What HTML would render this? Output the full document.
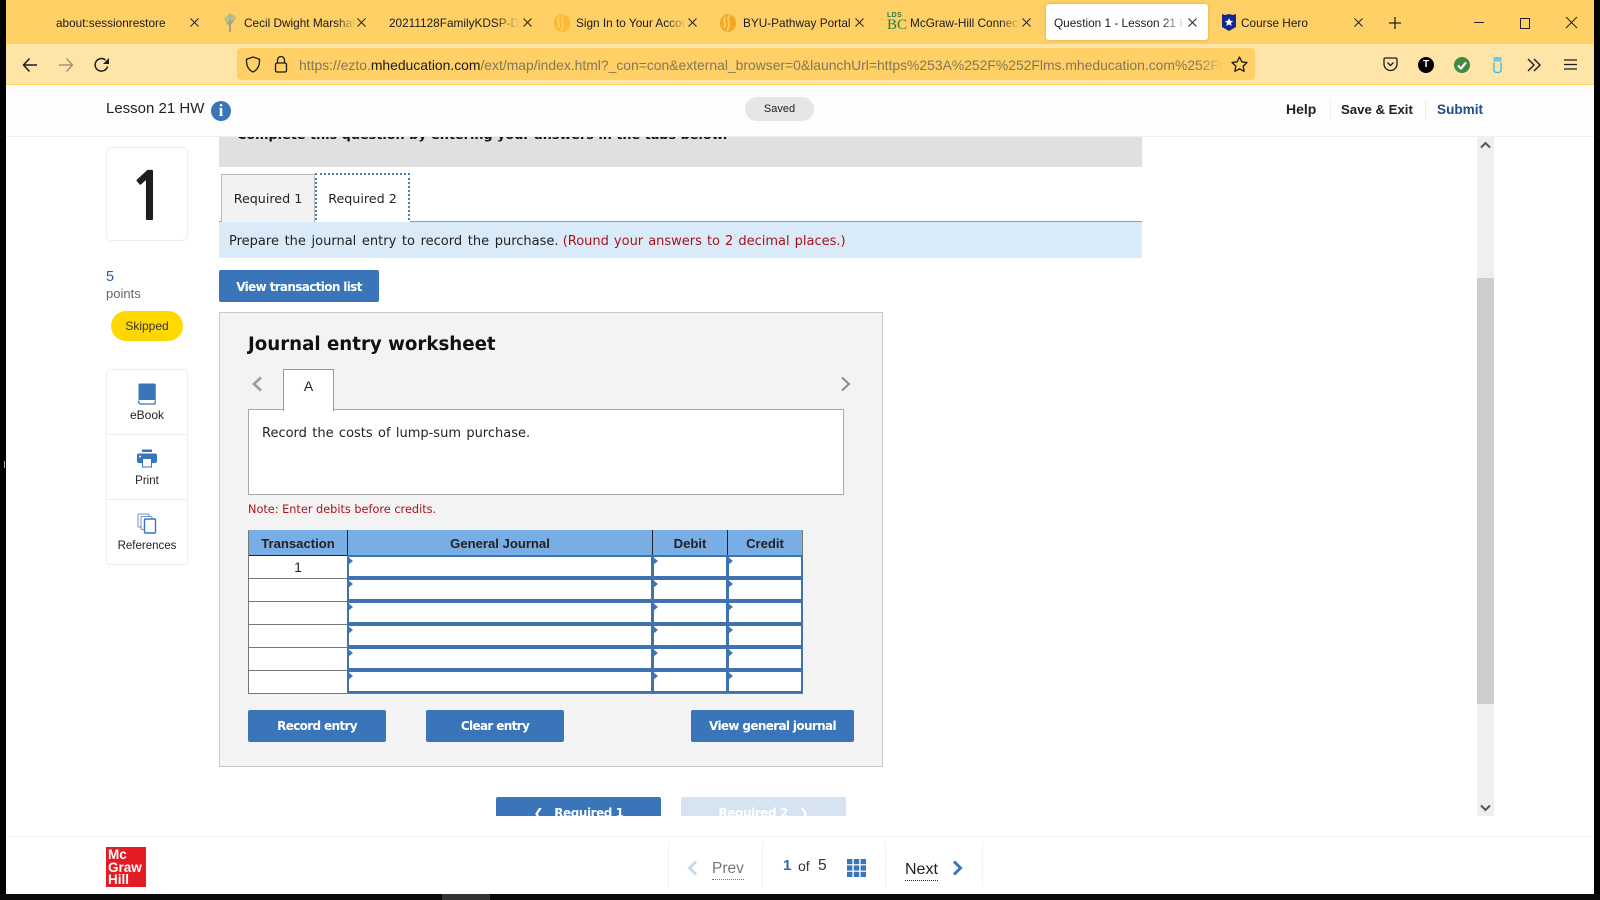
<!DOCTYPE html>
<html><head><meta charset="utf-8"><title>Question 1 - Lesson 21 HW</title>
<style>
html,body{margin:0;padding:0;background:#fff;}
body{position:relative;width:1600px;height:900px;overflow:hidden;font-family:"Liberation Sans",sans-serif;}
.a{position:absolute;}
.t{position:absolute;white-space:nowrap;}
.tab{font-size:11.8px;line-height:16px;top:15px;color:#1c1b22;overflow:hidden;-webkit-mask-image:linear-gradient(90deg,#000 82%,transparent 100%);mask-image:linear-gradient(90deg,#000 82%,transparent 100%);}
.x{position:absolute;top:17px;width:11px;height:11px;}
.v{font-family:"DejaVu Sans",sans-serif;}
.btn{position:absolute;background:#3b75b9;color:#fff;font-family:"DejaVu Sans",sans-serif;font-size:12px;font-weight:bold;text-align:center;border-radius:2px;letter-spacing:-.65px;}
.th{position:absolute;top:530px;height:25px;line-height:27px;background:#78ade5;text-align:center;font-size:13.1px;font-weight:bold;color:#222;border-right:1px solid #222;box-sizing:border-box;}
.cell{position:absolute;background:#fff;border:2px solid #3f72ae;box-sizing:border-box;height:23px;}
.cell:before{content:"";position:absolute;left:-1px;top:0;border-left:5px solid #3b75b9;border-top:4px solid transparent;border-bottom:4px solid transparent;}
.tc{position:absolute;left:249px;width:98px;height:22px;background:#fff;border-bottom:1px solid #777;text-align:center;font-size:14px;line-height:22px;color:#222;}
.sl{position:absolute;width:1px;background:#f1f1f1;top:842px;height:45px;}
</style></head><body>

<!-- browser chrome -->
<div class="a" style="left:0;top:0;width:1600px;height:44px;background:#ffd066;"></div>
<div class="a" style="left:0;top:44px;width:1600px;height:40px;background:#ffe4a8;"></div>
<div class="a" style="left:0;top:84px;width:1600px;height:1px;background:#ffd066;"></div>

<div class="t tab" style="left:56px;width:125px;-webkit-mask-image:none;mask-image:none;">about:sessionrestore</div>
<svg class="a" style="left:222px;top:13px" width="17" height="20" viewBox="0 0 17 20"><circle cx="5" cy="6" r="3" fill="#b5c77d"/><circle cx="11" cy="5" r="3" fill="#c4b98a"/><circle cx="8" cy="3" r="2.5" fill="#a9c27a"/><path d="M8 6v13M5 9l3 3M11 8l-3 3" stroke="#a8a08c" stroke-width="2" fill="none"/></svg>
<div class="t tab" style="left:244px;width:112px;">Cecil Dwight Marshall</div>
<div class="t tab" style="left:389px;width:130px;">20211128FamilyKDSP-D1.pdf</div>
<svg class="a" style="left:553px;top:13px" width="18" height="20" viewBox="0 0 18 20"><ellipse cx="9" cy="10" rx="8" ry="9" fill="#fdb92f"/><path d="M11 2C6 6 13 9 8 18M6 4C3 8 8 10 5 15" stroke="#ffd066" stroke-width="1.8" fill="none"/></svg>
<div class="t tab" style="left:576px;width:110px;">Sign In to Your Account</div>
<svg class="a" style="left:719px;top:13px" width="18" height="20" viewBox="0 0 18 20"><ellipse cx="9" cy="10" rx="8" ry="9" fill="#f5a623"/><path d="M11 2C6 6 13 9 8 18M6 4C3 8 8 10 5 15" stroke="#ffd066" stroke-width="1.8" fill="none"/></svg>
<div class="t" style="left:743px;top:15px;font-size:11.8px;line-height:16px;color:#1c1b22;">BYU-Pathway Portal</div>
<div class="t" style="left:887px;top:12px;font-size:7px;line-height:8px;font-weight:bold;color:#2d7a45;letter-spacing:.4px;">LDS</div>
<div class="t" style="left:887px;top:18px;font-family:'Liberation Serif',serif;font-size:15px;line-height:14px;color:#2d7a45;">BC</div>
<div class="t tab" style="left:910px;width:110px;">McGraw-Hill Connect</div>

<div class="a" style="left:1046px;top:4px;width:162px;height:36px;background:#fff;border-radius:3px;box-shadow:0 0 3px rgba(120,90,20,.3);"></div>
<div class="t tab" style="left:1054px;width:131px;">Question 1 - Lesson 21 HW</div>
<svg class="a" style="left:1221px;top:13px" width="16" height="19" viewBox="0 0 16 19"><path d="M1 1l3 1 4-1 4 1 3-1v13l-7 4-7-4z" fill="#13288c"/><path d="M8 5l1.2 2.8 3 .2-2.3 2 .8 3L8 11.400 5.300 13l.8-3-2.300-2 3-.2z" fill="#fff"/></svg>
<div class="t" style="left:1241px;top:15px;font-size:11.8px;line-height:16px;color:#1c1b22;">Course Hero</div>

<svg class="x" style="left:189px" viewBox="0 0 11 11"><path d="M1.500 1.500l8 8M9.500 1.500l-8 8" stroke="#2a2a2a" stroke-width="1.100"/></svg>
<svg class="x" style="left:356px" viewBox="0 0 11 11"><path d="M1.500 1.500l8 8M9.500 1.500l-8 8" stroke="#2a2a2a" stroke-width="1.100"/></svg>
<svg class="x" style="left:522px" viewBox="0 0 11 11"><path d="M1.500 1.500l8 8M9.500 1.500l-8 8" stroke="#2a2a2a" stroke-width="1.100"/></svg>
<svg class="x" style="left:687px" viewBox="0 0 11 11"><path d="M1.500 1.500l8 8M9.500 1.500l-8 8" stroke="#2a2a2a" stroke-width="1.100"/></svg>
<svg class="x" style="left:854px" viewBox="0 0 11 11"><path d="M1.500 1.500l8 8M9.500 1.500l-8 8" stroke="#2a2a2a" stroke-width="1.100"/></svg>
<svg class="x" style="left:1021px" viewBox="0 0 11 11"><path d="M1.500 1.500l8 8M9.500 1.500l-8 8" stroke="#2a2a2a" stroke-width="1.100"/></svg>
<svg class="x" style="left:1187px" viewBox="0 0 11 11"><path d="M1.500 1.500l8 8M9.500 1.500l-8 8" stroke="#2a2a2a" stroke-width="1.100"/></svg>
<svg class="x" style="left:1353px" viewBox="0 0 11 11"><path d="M1.500 1.500l8 8M9.500 1.500l-8 8" stroke="#2a2a2a" stroke-width="1.100"/></svg>
<svg class="a" style="left:1388px;top:16px" width="14" height="14" viewBox="0 0 14 14"><path d="M7 1v12M1 7h12" stroke="#222" stroke-width="1.300"/></svg>
<div class="a" style="left:1474px;top:22px;width:10px;height:1px;background:#222;"></div>
<div class="a" style="left:1520px;top:18px;width:8px;height:9px;border:1px solid #222;"></div>
<svg class="a" style="left:1565px;top:16px" width="13" height="13" viewBox="0 0 13 13"><path d="M1 1l11 11M12 1l-11 11" stroke="#222" stroke-width="1"/></svg>

<!-- toolbar -->
<svg class="a" style="left:22px;top:57px" width="16" height="16" viewBox="0 0 16 16"><path d="M15 8H1.500M7.500 1.500L1.500 8l6 6.500" stroke="#1c1b22" stroke-width="1.500" fill="none"/></svg>
<svg class="a" style="left:58px;top:57px" width="16" height="16" viewBox="0 0 16 16"><path d="M1 8h13.500M8.500 1.500l6 6.500-6 6.500" stroke="#a3947a" stroke-width="1.500" fill="none"/></svg>
<svg class="a" style="left:94px;top:57px" width="16" height="16" viewBox="0 0 16 16"><path d="M13.500 9.500A6.300 6.300 0 1 1 11.500 3" stroke="#1c1b22" stroke-width="1.500" fill="none"/><path d="M15 1v6H9z" fill="#1c1b22"/></svg>
<div class="a" style="left:237px;top:48px;width:1018px;height:32px;background:#ffd066;border-radius:4px;"></div>
<svg class="a" style="left:245px;top:56px" width="16" height="17" viewBox="0 0 16 17"><path d="M8 1l6.500 2.200c.3 6-1.500 10.500-6.500 12.800C3 13.700 1.200 9.200 1.500 3.200z" stroke="#1c1b22" stroke-width="1.300" fill="none"/></svg>
<svg class="a" style="left:274px;top:55px" width="14" height="18" viewBox="0 0 14 18"><rect x="1.500" y="8" width="11" height="9" rx="1.500" stroke="#1c1b22" stroke-width="1.300" fill="none"/><path d="M3.500 8V5a3.500 3.500 0 0 1 7 0v3" stroke="#1c1b22" stroke-width="1.300" fill="none"/></svg>
<div class="t" style="left:299px;top:56px;width:926px;overflow:hidden;font-size:13.9px;line-height:18px;color:#83775a;-webkit-mask-image:linear-gradient(90deg,#000 97%,transparent 100%);mask-image:linear-gradient(90deg,#000 97%,transparent 100%);">https://ezto.<span style="color:#1c1b22">mheducation.com</span>/ext/map/index.html?_con=con&amp;external_browser=0&amp;launchUrl=https%253A%252F%252Flms.mheducation.com%252Fmghmiddleware</div>
<svg class="a" style="left:1231px;top:56px" width="17" height="17" viewBox="0 0 17 17"><path d="M8.500 1l2.300 4.800 5.200.7-3.800 3.600.9 5.200-4.600-2.500-4.600 2.500.9-5.200L1 6.500l5.200-.7z" stroke="#1c1b22" stroke-width="1.300" fill="none" stroke-linejoin="round"/></svg>
<svg class="a" style="left:1383px;top:57px" width="15" height="15" viewBox="0 0 15 15"><path d="M1 2.500Q1 1 2.500 1h10Q14 1 14 2.500V7a6.500 6.500 0 0 1-13 0z" stroke="#1c1b22" stroke-width="1.300" fill="none"/><path d="M4.500 5.500l3 3 3-3" stroke="#1c1b22" stroke-width="1.300" fill="none"/></svg>
<div class="a" style="left:1418px;top:57px;width:16px;height:16px;border-radius:50%;background:#000;color:#fff;font-size:10px;font-weight:bold;line-height:16px;text-align:center;">T</div>
<svg class="a" style="left:1454px;top:57px" width="16" height="16" viewBox="0 0 16 16"><circle cx="8" cy="8" r="8" fill="#43883f"/><path d="M4 8.500l3 3 5-6" stroke="#fff" stroke-width="2.200" fill="none"/></svg>
<svg class="a" style="left:1492px;top:56px" width="11" height="18" viewBox="0 0 11 18"><rect x="1.500" y="1" width="8" height="4.500" fill="#6fc9e6"/><path d="M2 6.500v8q0 2 3.500 2t3.500-2v-8" stroke="#35b5e5" stroke-width="1.300" fill="none"/></svg>
<svg class="a" style="left:1527px;top:58px" width="14" height="14" viewBox="0 0 14 14"><path d="M1 1l6 6-6 6M7 1l6 6-6 6" stroke="#1c1b22" stroke-width="1.400" fill="none"/></svg>
<svg class="a" style="left:1564px;top:58px" width="13" height="13" viewBox="0 0 13 13"><path d="M0 2h13M0 6.500h13M0 11h13" stroke="#1c1b22" stroke-width="1.300"/></svg>

<!-- app header -->
<div class="a" style="left:0;top:85px;width:1600px;height:51px;background:#fdfdfd;z-index:3;border-bottom:1px solid #efefef;"></div>
<div class="t" style="left:106px;top:100px;font-size:15px;line-height:18px;color:#222;z-index:4;">Lesson 21 HW</div>
<div class="a v" style="left:211px;top:101px;width:20px;height:20px;border-radius:50%;background:#3b75b9;color:#fff;font-family:'Liberation Serif',serif;font-weight:bold;font-size:17px;line-height:20px;text-align:center;z-index:4;">i</div>
<div class="a" style="left:745px;top:97px;width:69px;height:24px;border-radius:12px;background:#e6e6e8;text-align:center;font-size:11px;line-height:24px;color:#222;z-index:4;">Saved</div>
<div class="t" style="left:1286px;top:100px;font-size:14px;line-height:18px;font-weight:bold;color:#222;z-index:4;">Help</div>
<div class="a" style="left:1330px;top:100px;width:1px;height:20px;background:#eee;z-index:4;"></div>
<div class="t" style="left:1341px;top:101px;font-size:13.2px;line-height:18px;font-weight:bold;color:#222;z-index:4;">Save &amp; Exit</div>
<div class="a" style="left:1425px;top:100px;width:1px;height:20px;background:#eee;z-index:4;"></div>
<div class="t" style="left:1437px;top:101px;font-size:13.6px;line-height:18px;font-weight:bold;color:#1f4e8c;z-index:4;">Submit</div>

<!-- left rail -->
<div class="a" style="left:106px;top:147px;width:80px;height:92px;border:1px solid #eee;border-radius:5px;"></div>
<div class="t" style="left:107px;top:158px;width:82px;text-align:center;font-family:'NanumGothic',sans-serif;font-weight:bold;font-size:66px;line-height:78px;color:#1e1e1e;">1</div>
<div class="t" style="left:106px;top:268px;font-size:14.5px;line-height:18px;color:#2a5ea8;">5</div>
<div class="t" style="left:106px;top:285px;font-size:13px;line-height:17px;color:#666;">points</div>
<div class="a" style="left:111px;top:311px;width:72px;height:30px;border-radius:15px;background:#ffd800;text-align:center;font-size:12px;line-height:30px;color:#333;">Skipped</div>
<div class="a" style="left:106px;top:369px;width:80px;height:194px;border:1px solid #eee;border-radius:4px;"></div>
<div class="a" style="left:107px;top:434px;width:80px;height:1px;background:#eee;"></div>
<div class="a" style="left:107px;top:499px;width:80px;height:1px;background:#eee;"></div>
<svg class="a" style="left:137px;top:383px" width="20" height="22" viewBox="0 0 20 22"><path d="M1.500 18V1.500q0-1 1-1H18V17H4q-2.500 0-2.500 1z" fill="#3b75b9"/><path d="M1.500 18q0 3 2.500 3h14v-3" stroke="#3b75b9" stroke-width="1.300" fill="#fff"/><path d="M18.500 1v18" stroke="#8d86b0" stroke-width="1"/></svg>
<div class="t" style="left:107px;top:407.500px;width:80px;text-align:center;font-size:12px;line-height:15px;color:#222;">eBook</div>
<svg class="a" style="left:137px;top:449px" width="20" height="20" viewBox="0 0 20 20"><rect x="5" y="0.500" width="10" height="2.500" fill="#3b75b9"/><rect x="0" y="4.500" width="20" height="9.500" rx="2" fill="#3b75b9"/><rect x="5.500" y="9.500" width="9" height="8.500" fill="#fff" stroke="#3b75b9" stroke-width="1"/><circle cx="3" cy="7.500" r="1" fill="#fff"/></svg>
<div class="t" style="left:107px;top:472.500px;width:80px;text-align:center;font-size:11.500px;line-height:17px;color:#222;">Print</div>
<svg class="a" style="left:137px;top:513px" width="20" height="21" viewBox="0 0 20 21"><rect x="1" y="1" width="11" height="13" rx="1" fill="#fff" stroke="#6f93c5"/><rect x="4" y="3.500" width="11" height="13" rx="1" fill="#fff" stroke="#6f93c5"/><rect x="7.500" y="6" width="11" height="14" rx="1" fill="#fff" stroke="#3b75b9" stroke-width="1.400"/></svg>
<div class="t" style="left:107px;top:538.500px;width:80px;text-align:center;font-size:11.500px;line-height:15px;color:#222;">References</div>

<!-- scroll content -->
<div class="a" style="left:0;top:137px;width:1476px;height:679px;overflow:hidden;">
  <div class="a" style="left:219px;top:-20px;width:923px;height:50px;background:#e0e0e0;"></div>
  <div class="t v" style="left:237px;top:-10px;font-size:12.8px;font-weight:bold;line-height:18px;color:#111;">Complete this question by entering your answers in the tabs below.</div>

  <div class="a" style="left:219px;top:84px;width:923px;height:1px;background:#999;"></div>
  <div class="a v" style="left:221px;top:37px;width:92px;height:47px;background:#f2f2f2;border:1px solid #bbb;border-bottom:none;text-align:center;font-size:12.7px;line-height:48px;color:#222;box-sizing:content-box;">Required 1</div>
  <div class="a v" style="left:315px;top:36px;width:91px;height:47px;background:#fff;border:2px dotted #4f7db5;text-align:center;font-size:12.7px;line-height:47px;color:#222;">Required 2</div>
  <div class="a v" style="left:219px;top:85px;width:923px;height:36px;background:#d9eaf9;font-size:13px;line-height:40px;color:#222;white-space:nowrap;"><span style="margin-left:10px;word-spacing:1.500px;">Prepare the journal entry to record the purchase.</span> <span style="color:#a8131d;word-spacing:.9px;">(Round your answers to 2 decimal places.)</span></div>
  <div class="btn" style="left:219px;top:133px;width:160px;height:32px;line-height:34px;">View transaction list</div>

  <!-- worksheet -->
  <div class="a" style="left:219px;top:175px;width:662px;height:453px;background:#f3f3f3;border:1px solid #c8c8c8;"></div>
  <div class="t v" style="left:248px;top:196px;font-size:18.2px;font-weight:bold;line-height:24px;color:#111;">Journal entry worksheet</div>
  <svg class="a" style="left:251px;top:239px" width="12" height="16" viewBox="0 0 12 16"><path d="M10 1.500L3 8l7 6.500" stroke="#999" stroke-width="2.600" fill="none"/></svg>
  <svg class="a" style="left:840px;top:239px" width="12" height="16" viewBox="0 0 12 16"><path d="M2 1.500L9 8l-7 6.500" stroke="#888" stroke-width="2" fill="none"/></svg>
  <div class="a" style="left:248px;top:272px;width:594px;height:84px;background:#fff;border:1px solid #aaa;"></div>
  <div class="a v" style="left:283px;top:232px;width:49px;height:41px;background:#fff;border:1px solid #999;border-bottom:none;text-align:center;font-family:'Liberation Sans',sans-serif;font-size:14px;line-height:32px;color:#222;z-index:2;">A</div>
  <div class="t v" style="left:262px;top:288px;font-size:13px;line-height:18px;color:#222;word-spacing:1.200px;">Record the costs of lump-sum purchase.</div>
  <div class="t v" style="left:248px;top:365px;font-size:11.3px;line-height:16px;color:#a8131d;">Note: Enter debits before credits.</div>
</div>

<!-- table -->
<div class="a" style="left:248px;top:530px;width:555px;height:164px;border:1px solid #777;box-sizing:border-box;background:#fff;"></div>
<div class="th" style="left:249px;width:99px;">Transaction</div>
<div class="th" style="left:348px;width:305px;">General Journal</div>
<div class="th" style="left:653px;width:75px;">Debit</div>
<div class="th" style="left:728px;width:74px;border-right:none;">Credit</div>
<div class="a" style="left:249px;top:555px;width:553px;height:1px;background:#222;"></div>
<div class="tc" style="top:556px;">1</div>
<div class="tc" style="top:579px;"></div>
<div class="tc" style="top:602px;"></div>
<div class="tc" style="top:625px;"></div>
<div class="tc" style="top:648px;"></div>
<div class="tc" style="top:671px;border-bottom:none;"></div>
<div class="cell" style="left:347px;top:555px;width:306px;"></div><div class="cell" style="left:652px;top:555px;width:76px;"></div><div class="cell" style="left:727px;top:555px;width:76px;"></div>
<div class="cell" style="left:347px;top:578px;width:306px;"></div><div class="cell" style="left:652px;top:578px;width:76px;"></div><div class="cell" style="left:727px;top:578px;width:76px;"></div>
<div class="cell" style="left:347px;top:601px;width:306px;"></div><div class="cell" style="left:652px;top:601px;width:76px;"></div><div class="cell" style="left:727px;top:601px;width:76px;"></div>
<div class="cell" style="left:347px;top:624px;width:306px;"></div><div class="cell" style="left:652px;top:624px;width:76px;"></div><div class="cell" style="left:727px;top:624px;width:76px;"></div>
<div class="cell" style="left:347px;top:647px;width:306px;"></div><div class="cell" style="left:652px;top:647px;width:76px;"></div><div class="cell" style="left:727px;top:647px;width:76px;"></div>
<div class="cell" style="left:347px;top:670px;width:306px;"></div><div class="cell" style="left:652px;top:670px;width:76px;"></div><div class="cell" style="left:727px;top:670px;width:76px;"></div>

<div class="btn" style="left:248px;top:710px;width:138px;height:32px;line-height:33px;">Record entry</div>
<div class="btn" style="left:426px;top:710px;width:138px;height:32px;line-height:33px;">Clear entry</div>
<div class="btn" style="left:691px;top:710px;width:163px;height:32px;line-height:33px;">View general journal</div>

<!-- clipped bottom nav -->
<div class="a" style="left:496px;top:797px;width:165px;height:19px;overflow:hidden;background:#3b75b9;border-radius:2px 2px 0 0;color:#fff;font-family:'DejaVu Sans',sans-serif;font-size:12px;font-weight:bold;text-align:center;line-height:33px;letter-spacing:-.45px;">❮&nbsp;&nbsp; Required 1</div>
<div class="a" style="left:681px;top:797px;width:165px;height:19px;overflow:hidden;background:#d6e3f1;border-radius:2px 2px 0 0;color:#fff;font-family:'DejaVu Sans',sans-serif;font-size:12px;font-weight:bold;text-align:center;line-height:33px;letter-spacing:-.45px;">Required 2 &nbsp;&nbsp;❯</div>

<!-- scrollbar -->
<div class="a" style="left:1477px;top:137px;width:17px;height:679px;background:#efefef;"></div>
<div class="a" style="left:1477px;top:278px;width:17px;height:426px;background:#cdcdcd;"></div>
<svg class="a" style="left:1480px;top:141px" width="11" height="8" viewBox="0 0 11 8"><path d="M1 6.500l4.500-4.500 4.500 4.500" stroke="#555" stroke-width="2" fill="none"/></svg>
<svg class="a" style="left:1480px;top:804px" width="11" height="8" viewBox="0 0 11 8"><path d="M1 1.500l4.500 4.500 4.500-4.500" stroke="#555" stroke-width="2" fill="none"/></svg>

<!-- footer -->
<div class="a" style="left:0;top:836px;width:1600px;height:1px;background:#f0f0f0;"></div>
<div class="a" style="left:106px;top:847px;width:40px;height:40px;background:#e31b23;color:#fff;font-size:13.5px;font-weight:bold;line-height:12.500px;padding:2px 0 0 2px;box-sizing:border-box;">Mc<br>Graw<br>Hill</div>
<div class="sl" style="left:668px;"></div><div class="sl" style="left:762px;"></div><div class="sl" style="left:885px;"></div><div class="sl" style="left:982px;"></div>
<svg class="a" style="left:686px;top:860px" width="12" height="16" viewBox="0 0 12 16"><path d="M10 1.500L3.500 8l6.500 6.500" stroke="#c9d9ec" stroke-width="3" fill="none"/></svg>
<div class="t" style="left:712px;top:859px;font-size:15.5px;line-height:20px;color:#777;border-bottom:1px dotted #777;">Prev</div>
<div class="t" style="left:783px;top:857px;font-size:15px;line-height:18px;font-weight:bold;color:#2e6cb5;">1</div>
<div class="t" style="left:798px;top:857px;font-size:14px;line-height:18px;color:#333;">of</div>
<div class="t" style="left:818px;top:857px;font-size:15.500px;line-height:18px;color:#333;">5</div>
<svg class="a" style="left:847px;top:859px" width="19" height="18" viewBox="0 0 19 18" fill="#3b75b9"><rect width="5.400" height="5.200"/><rect x="6.800" width="5.400" height="5.200"/><rect x="13.600" width="5.400" height="5.200"/><rect y="6.400" width="5.400" height="5.200"/><rect x="6.800" y="6.400" width="5.400" height="5.200"/><rect x="13.600" y="6.400" width="5.400" height="5.200"/><rect y="12.800" width="5.400" height="5.200"/><rect x="6.800" y="12.800" width="5.400" height="5.200"/><rect x="13.600" y="12.800" width="5.400" height="5.200"/></svg>
<div class="t" style="left:905px;top:859px;font-size:16px;line-height:21px;color:#222;border-bottom:1px dotted #222;">Next</div>
<svg class="a" style="left:952px;top:860px" width="12" height="16" viewBox="0 0 12 16"><path d="M2 1.500L8.500 8 2 14.500" stroke="#3b75b9" stroke-width="3" fill="none"/></svg>

<!-- desktop black frame -->
<div class="a" style="left:0;top:0;width:6px;height:900px;background:#000;z-index:9;"></div>
<div class="a" style="left:1594px;top:0;width:6px;height:900px;background:#000;z-index:9;"></div>
<div class="a" style="left:0;top:894px;width:1600px;height:6px;background:#0a0a0a;z-index:9;"></div>
<div class="a" style="left:442px;top:894px;width:48px;height:6px;background:#333;z-index:10;"></div>
<div class="a" style="left:4px;top:461px;width:1px;height:7px;background:#9ab;z-index:10;"></div>
</body></html>
